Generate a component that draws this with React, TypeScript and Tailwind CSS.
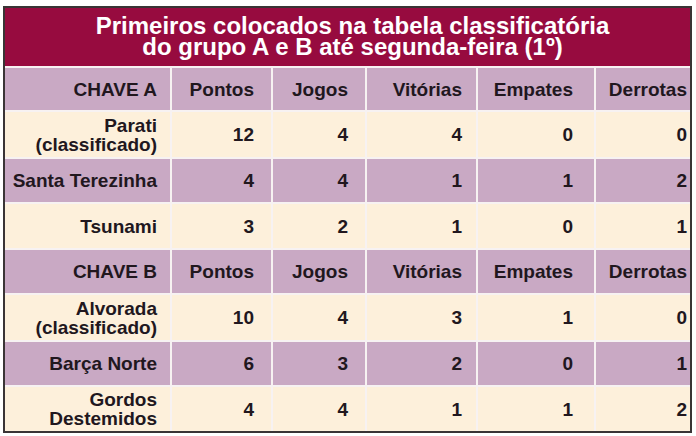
import { Fragment } from "react";

const groups = [
  {
    name: "CHAVE A",
    rows: [
      { team: ["Parati", "(classificado)"], stats: [12, 4, 4, 0, 0] },
      { team: ["Santa Terezinha"], stats: [4, 4, 1, 1, 2] },
      { team: ["Tsunami"], stats: [3, 2, 1, 0, 1] },
    ],
  },
  {
    name: "CHAVE B",
    rows: [
      { team: ["Alvorada", "(classificado)"], stats: [10, 4, 3, 1, 0] },
      { team: ["Barça Norte"], stats: [6, 3, 2, 0, 1] },
      { team: ["Gordos", "Destemidos"], stats: [4, 4, 1, 1, 2] },
    ],
  },
];

const headers = ["Pontos", "Jogos", "Vitórias", "Empates", "Derrotas"];
const pads = ["pr-[17px]", "pr-[17px]", "pr-[14px]", "pr-[21px]", "pr-[3px]"];

const cell = "flex items-center justify-end text-right";
const teamCell = "flex flex-col items-end justify-center text-right pr-[13px]";

export default function App() {
  return (
    <div className="w-[696px] h-[436px] bg-white pt-[6px] pl-[3px] font-['Liberation_Sans',Arial,sans-serif] font-bold text-[19px] leading-[19px] text-[#21171e]">
      <div className="w-[689px] border-2 border-[#3a3435]">
        <div className="grid grid-cols-[165px_99px_92px_109px_116px_94px] grid-rows-[58px_42px_45px_43px_44px_43px_45px_43px_44px] gap-[2px] bg-[#f7f2f2]">
          <div className="col-span-6 bg-[#970b3f] text-white text-[24px] leading-[21px] flex flex-col items-center justify-center pb-[2px] pl-[10px]">
            <span>Primeiros colocados na tabela classificatória</span>
            <span>do grupo A e B até segunda-feira (1º)</span>
          </div>
          {groups.map((g) => (
            <Fragment key={g.name}>
              <div className={`${cell} bg-[#c9a9c4] pr-[13px]`}>{g.name}</div>
              {headers.map((h, i) => (
                <div key={h} className={`${cell} bg-[#c9a9c4] ${pads[i]}`}>
                  {h}
                </div>
              ))}
              {g.rows.map((r, ri) => {
                const bg = ri % 2 === 1 ? "bg-[#c9a9c4]" : "bg-[#fdf0db]";
                return (
                  <Fragment key={r.team[0]}>
                    <div className={`${teamCell} ${bg}`}>
                      {r.team.map((t) => (
                        <span key={t}>{t}</span>
                      ))}
                    </div>
                    {r.stats.map((s, i) => (
                      <div key={i} className={`${cell} ${bg} ${pads[i]}`}>
                        {s}
                      </div>
                    ))}
                  </Fragment>
                );
              })}
            </Fragment>
          ))}
        </div>
      </div>
    </div>
  );
}
